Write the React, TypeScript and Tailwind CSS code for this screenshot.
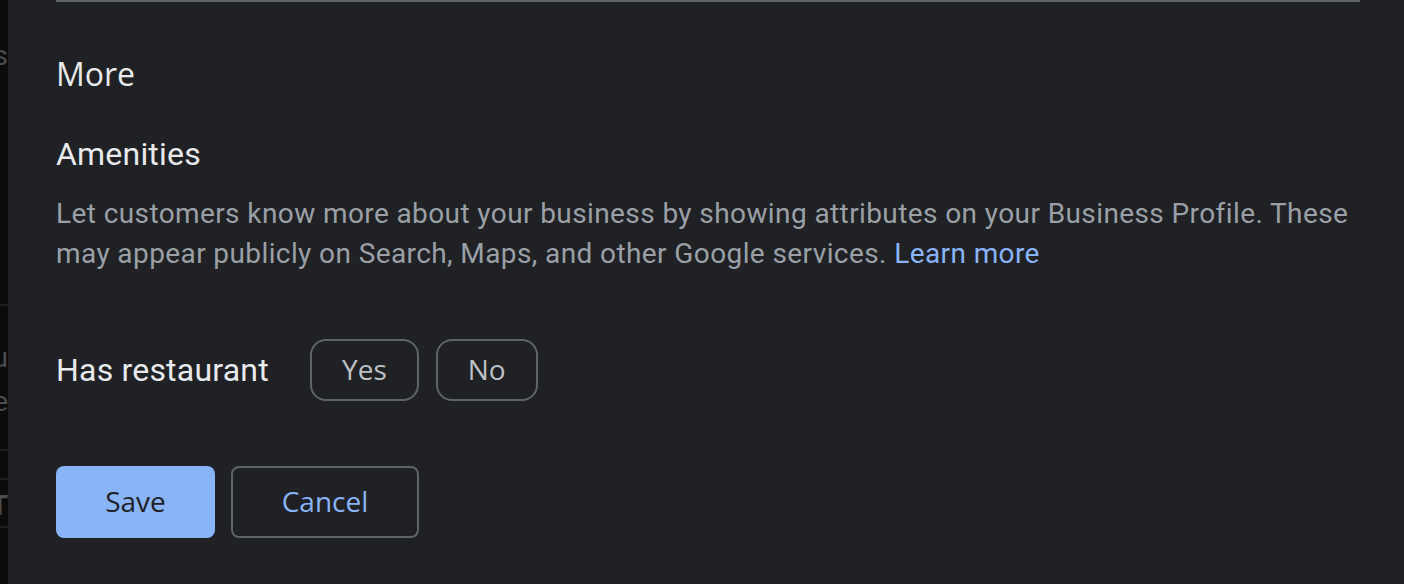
import React from "react";

const gsans = "font-['Open_Sans','Roboto',sans-serif]";

function StripText({ text, className }: { text: string; className?: string }) {
  return (
    <div className={`flex justify-end whitespace-nowrap ${className ?? ""}`}>
      <span>{text}</span>
    </div>
  );
}

function SidePeek() {
  return (
    <div className="flex w-[8px] shrink-0 flex-col overflow-hidden bg-[#0b0b0b] text-[28px] leading-[40px] text-[#4a4c4f]">
      <StripText text="Hours" className="mt-[36px]" />
      <div className="mt-[228px] h-[2px] bg-[#1d1e20]" />
      <StripText text="Menu" className="mt-[32px]" />
      <StripText text="More" className="mt-[4px]" />
      <div className="mt-[27px] h-[2px] bg-[#1d1e20]" />
      <div className="mt-[27px] h-[2px] bg-[#1d1e20]" />
      <StripText text="EDIT" className="mt-[6px] font-bold" />
      <div className="h-[2px] bg-[#1d1e20]" />
    </div>
  );
}

function Choice({ label }: { label: string }) {
  return (
    <button className={`h-[62px] rounded-[16px] border-2 border-[#5f6368] px-[30px] pb-[2px] text-[28px] font-medium text-[#bdc1c6] ${gsans}`}>
      {label}
    </button>
  );
}

export default function App() {
  return (
    <div className="flex h-[584px] w-[1404px] overflow-hidden bg-[#202124] font-['Roboto','Liberation_Sans',sans-serif]">
      <SidePeek />
      <div className="flex flex-1 flex-col pl-[48px] pr-[44px]">
        <div className="h-[2px] bg-[#5f6368]" />
        <h2 className={`mt-[52px] text-[32px] font-medium leading-[40px] text-[#e8eaed] ${gsans}`}>More</h2>
        <h3 className="mt-[40px] text-[32px] leading-[40px] tracking-[0.2px] text-[#e8eaed]">Amenities</h3>
        <p className="mt-[20px] text-[28px] leading-[40px] tracking-[0.4px] text-[#9aa0a6]">
          Let customers know more about your business by showing attributes on your Business Profile. These
          may appear publicly on Search, Maps, and other Google services.{" "}
          <a className="text-[#8ab4f8]">Learn more</a>
        </p>
        <div className="mt-[65px] flex items-center">
          <span className="w-[254px] text-[32px] leading-[40px] tracking-[0.2px] text-[#e8eaed]">Has restaurant</span>
          <div className="flex gap-[17px]">
            <Choice label="Yes" />
            <Choice label="No" />
          </div>
        </div>
        <div className="mt-[65px] flex gap-[16px]">
          <button className={`h-[72px] w-[159px] rounded-[8px] bg-[#8ab4f8] pb-[3px] text-[28px] font-medium text-[#202124] ${gsans}`}>
            Save
          </button>
          <button className={`h-[72px] w-[188px] rounded-[8px] border-2 border-[#5f6368] pb-[3px] text-[28px] font-medium text-[#8ab4f8] ${gsans}`}>
            Cancel
          </button>
        </div>
      </div>
    </div>
  );
}
